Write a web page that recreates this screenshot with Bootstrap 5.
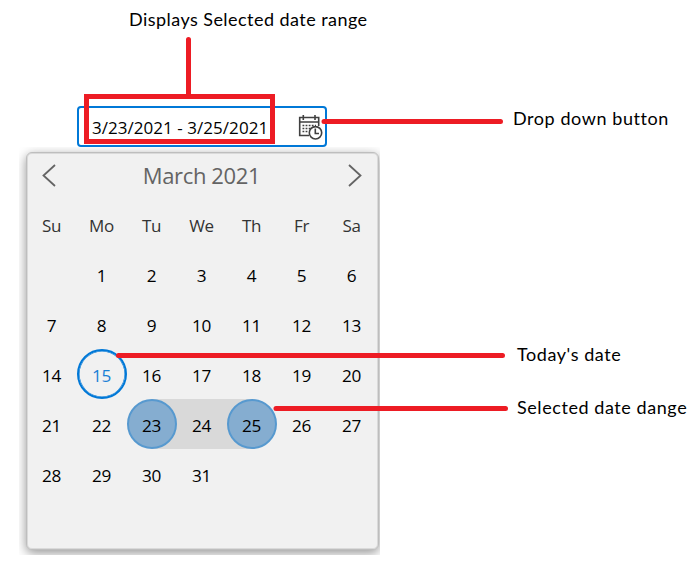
<!DOCTYPE html>
<html lang="en">
<head>
<meta charset="utf-8">
<meta name="viewport" content="width=device-width, initial-scale=1">
<title>Date range picker</title>
<link href="https://cdn.jsdelivr.net/npm/bootstrap@5.3.0/dist/css/bootstrap.min.css" rel="stylesheet">
<style>
body{font-family:"Open Sans","Noto Sans",sans-serif;background:#fff;color:#000;overflow:hidden}
.stage{width:692px;height:563px;padding-top:106px}
.picker{width:250px;height:41px;margin-left:77px;border:2px solid #0078d7;border-radius:4px;background:#fff;padding:2px 2px 0 13px;z-index:1}
.range-text{font-size:17px;line-height:36px;white-space:pre;letter-spacing:.04px}
.shade{width:361px;height:408px;margin-left:19px;margin-top:0;overflow:hidden;padding:5px 0 0 7px}
.panel{width:353px;height:398px;border:1px solid #bebebe;border-radius:6px;background:#f1f1f1;box-shadow:0 3px 11px rgba(0,0,0,.42),inset 0 0 0 1px #dadada}
.month-bar{height:46px;padding:0 16px 0 14px;color:#646464}
.month-name{font-size:22px;line-height:44px;letter-spacing:-.38px;margin-top:-2px}
.days{display:grid;grid-template-columns:repeat(7,50px);grid-auto-rows:50px;font-size:17.2px}
.days>div{display:flex;align-items:center;justify-content:center;padding:3px 1px 0 0;letter-spacing:-.3px}
.days>.wd{color:#333;font-size:17px;padding-top:3px}
.days>.now{border:2.5px solid #0078d7;border-radius:50%;color:#1a80d6;box-shadow:inset 0 0 0 .5px #0078d7}
.days>.mid{background:#d9d9d9}
.days>.from{background:linear-gradient(90deg,transparent 50%,#d9d9d9 50%)}
.days>.to{background:linear-gradient(90deg,#d9d9d9 50%,transparent 50%)}
.days>.from,.days>.to{padding:0}
.disc{width:50px;height:50px;border-radius:50%;border:2px solid #5799cf;background:#85add0;padding:3px 1px 0 0}
.note{position:absolute;font-family:Lato,"Open Sans",sans-serif;font-size:18px;line-height:24px;letter-spacing:.57px;white-space:nowrap;z-index:3}
.note-top{letter-spacing:.45px}
.marks{position:absolute;left:0;top:0;z-index:2}
</style>
</head>
<body>
<main class="stage position-relative overflow-hidden">
  <div class="picker d-flex align-items-start justify-content-between position-relative">
    <span class="range-text">3/23/2021 - 3/25/2021</span>
    <svg width="26" height="28" viewBox="0 0 26 28" fill="none" stroke="#404040" stroke-width="1.6" class="mt-1">
      <path d="M12 21.500H2.700V3.500H21.700V12M2.700 8H21.700M6.300 1V6M18 1V6"/>
      <path d="M5.500 11.500H19M5.500 14.500H14M5.500 17.500H11" stroke-dasharray="1.800 1.300"/>
      <circle cx="18.500" cy="18.800" r="6.200"/>
      <path d="M18.300 14.500V19.500H22"/>
    </svg>
  </div>
  <div class="shade">
    <section class="panel">
      <header class="month-bar d-flex justify-content-between align-items-center">
        <svg width="16" height="24" viewBox="0 0 16 24" fill="none" stroke="#646464" stroke-width="1.8"><path d="M14 1L2.500 11.500L14 22"/></svg>
        <span class="month-name">March 2021</span>
        <svg width="16" height="24" viewBox="0 0 16 24" fill="none" stroke="#646464" stroke-width="1.8"><path d="M3 1L14.500 11.500L3 22"/></svg>
      </header>
      <div class="days">
        <div class="wd">Su</div><div class="wd">Mo</div><div class="wd">Tu</div><div class="wd">We</div><div class="wd">Th</div><div class="wd">Fr</div><div class="wd">Sa</div>
        <div></div><div>1</div><div>2</div><div>3</div><div>4</div><div>5</div><div>6</div>
        <div>7</div><div>8</div><div>9</div><div>10</div><div>11</div><div>12</div><div>13</div>
        <div>14</div><div class="now">15</div><div>16</div><div>17</div><div>18</div><div>19</div><div>20</div>
        <div>21</div><div>22</div><div class="from"><span class="disc d-flex align-items-center justify-content-center">23</span></div><div class="mid">24</div><div class="to"><span class="disc d-flex align-items-center justify-content-center">25</span></div><div>26</div><div>27</div>
        <div>28</div><div>29</div><div>30</div><div>31</div>
      </div>
    </section>
  </div>
  <svg class="marks" width="692" height="563" fill="none" stroke="#ed1c24" stroke-width="5" stroke-linecap="round">
    <rect x="86.5" y="96.500" width="186" height="45" stroke-linecap="butt"/>
    <path d="M188.500 39.500V95M324 121.500H500.500M118.500 355.500H502.500M276 408.500H505.500"/>
  </svg>
  <div class="note note-top" style="left:129px;top:7px">Displays Selected date range</div>
  <div class="note" style="left:513px;top:106px">Drop down button</div>
  <div class="note" style="left:517px;top:342px">Today's date</div>
  <div class="note" style="left:517px;top:395px">Selected date dange</div>
</main>
<script src="https://cdn.jsdelivr.net/npm/bootstrap@5.3.0/dist/js/bootstrap.bundle.min.js"></script>
</body>
</html>
